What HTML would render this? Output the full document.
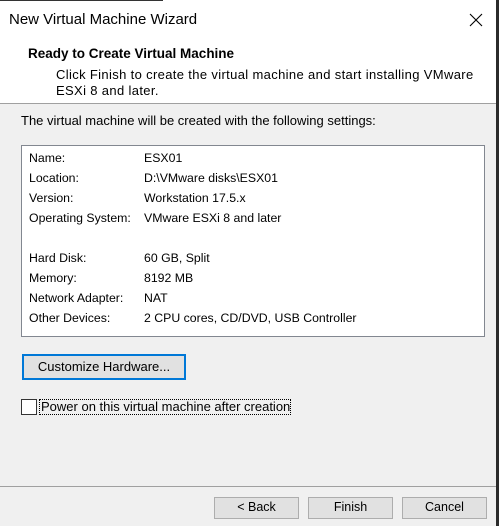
<!DOCTYPE html>
<html><head><style>
*{margin:0;padding:0;box-sizing:border-box}
body{width:499px;height:526px;background:#f0f0f0;font-family:"Liberation Sans",sans-serif;font-size:12px;color:#000;position:relative;overflow:hidden}
.a{position:absolute;white-space:nowrap}
.hdr{position:absolute;left:0;top:0;width:499px;height:104px;background:#fff;border-bottom:1px solid #a0a0a0}
.btn{position:absolute;background:#e1e1e1;border:1px solid #adadad;text-align:center;line-height:19px}
</style></head><body>
<div class="hdr"></div>
<div class="a" style="left:0;top:0;width:163px;height:1px;background:#333"></div>
<div class="a" style="left:496px;top:0;width:3px;height:526px;background:#2b2b2b"></div>
<div class="a" style="left:9px;top:11px;font-size:15px;color:#000">New Virtual Machine Wizard</div>
<svg class="a" style="left:469px;top:13px" width="14" height="14"><path d="M1 1L13 13M13 1L1 13" stroke="#000" stroke-width="1.1"/></svg>
<div class="a" style="left:28px;top:46px;font-weight:bold;font-size:13.5px">Ready to Create Virtual Machine</div>
<div class="a" style="left:56px;top:67px;font-size:13px;letter-spacing:0.35px">Click Finish to create the virtual machine and start installing VMware</div>
<div class="a" style="left:56px;top:83px;font-size:13px;letter-spacing:0.35px">ESXi 8 and later.</div>
<div class="a" style="left:21px;top:113px;font-size:13px">The virtual machine will be created with the following settings:</div>
<div class="a" style="left:21px;top:145px;width:464px;height:192px;background:#fff;border:1px solid #828790"></div>
<div class="a" style="left:29px;top:148px;line-height:20px;font-size:12.3px">Name:<br>Location:<br>Version:<br>Operating System:<br><br>Hard Disk:<br>Memory:<br>Network Adapter:<br>Other Devices:</div>
<div class="a" style="left:144px;top:148px;line-height:20px;font-size:12.3px">ESX01<br>D:\VMware disks\ESX01<br>Workstation 17.5.x<br>VMware ESXi 8 and later<br><br>60 GB, Split<br>8192 MB<br>NAT<br>2 CPU cores, CD/DVD, USB Controller</div>
<div class="btn" style="left:22px;top:354px;width:164px;height:26px;border:2px solid #0078d7;line-height:22px;font-size:13px">Customize Hardware...</div>
<div class="a" style="left:21px;top:399px;width:16px;height:16px;background:#fff;border:1px solid #333"></div>
<div class="a" style="left:39px;top:399px;width:252px;height:16px;border:1px dotted #000;line-height:14px;padding-left:1px;font-size:13px">Power on this virtual machine after creation</div>
<div class="a" style="left:0;top:486px;width:496px;height:1px;background:#a0a0a0"></div>
<div class="btn" style="left:214px;top:497px;width:85px;height:22px;font-size:12.5px">&lt; Back</div>
<div class="btn" style="left:308px;top:497px;width:85px;height:22px;font-size:12.5px">Finish</div>
<div class="btn" style="left:402px;top:497px;width:85px;height:22px;font-size:12.5px">Cancel</div>
</body></html>
